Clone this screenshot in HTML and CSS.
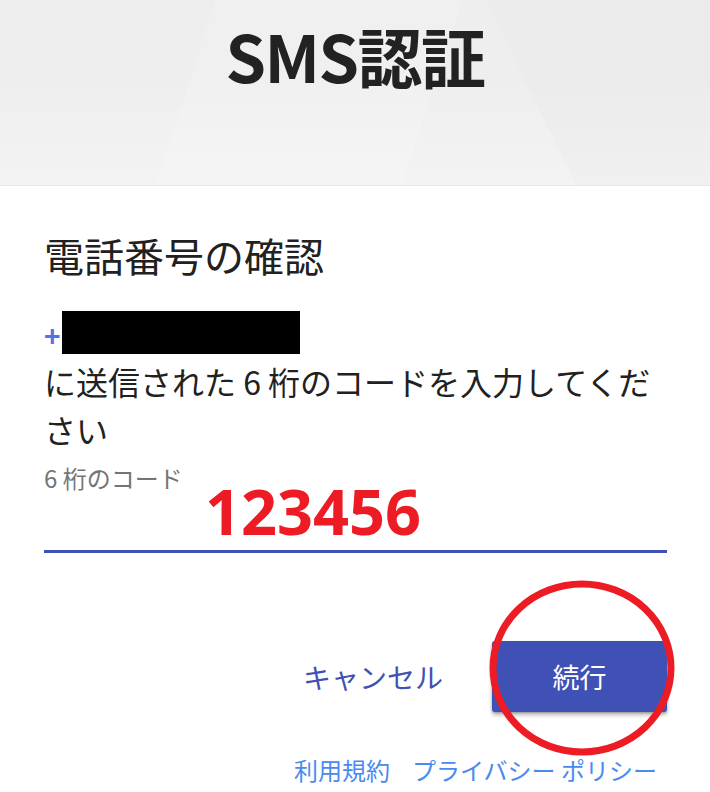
FILE: index.html
```html
<!DOCTYPE html>
<html lang="ja">
<head>
<meta charset="utf-8">
<title>SMS認証</title>
<link rel="stylesheet" href="styles.css">
</head>
<body>
<div class="page">
  <header class="hero">
    <h1 class="hero-title">SMS認証</h1>
  </header>
  <main class="card">
    <h2 class="card-title">電話番号の確認</h2>
    <div class="phone-row">
      <span class="plus">+</span><span class="redact"></span>
    </div>
    <p class="desc">に送信された 6 桁のコードを入力してください</p>
    <div class="field">
      <label class="field-label">6 桁のコード</label>
      <div class="field-value">123456</div>
    </div>
    <div class="actions">
      <button class="btn-cancel">キャンセル</button>
      <button class="btn-primary">続行</button>
    </div>
    <nav class="footer-links">
      <a class="link">利用規約</a>
      <a class="link">プライバシー ポリシー</a>
    </nav>
    <svg class="annot" width="200" height="190" viewBox="0 0 200 190">
      <ellipse cx="100" cy="95" rx="89" ry="84" fill="none" stroke="#ed1c24" stroke-width="7"/>
    </svg>
  </main>
</div>
</body>
</html>
```
FILE: styles.css
```css
* { box-sizing: border-box; }
html, body { margin: 0; padding: 0; background: #fff; }
body {
  font-family: "Noto Sans CJK JP", "Noto Sans", sans-serif;
  color: #212121;
  width: 710px;
  height: 792px;
  overflow: hidden;
}
.page { display: flex; flex-direction: column; }
.hero {
  height: 186px;
  background-color: #eeeeee;
  background-image:
    linear-gradient(108deg, rgba(255,255,255,0) 0 28%, rgba(255,255,255,0.14) 28% 60%, rgba(255,255,255,0) 60%),
    linear-gradient(64deg, rgba(0,0,0,0) 0 72%, rgba(0,0,0,0.01) 72% 100%),
    linear-gradient(180deg, rgba(255,255,255,0) 0 40%, rgba(255,255,255,0.3) 100%);
  border-bottom: 1px solid #e7e7e7;
  display: flex;
  justify-content: center;
  align-items: flex-start;
}
.hero-title {
  margin: 16px 0 0;
  font-size: 65px;
  font-weight: 700;
  line-height: 78px;
  color: #222;
  letter-spacing: -1.5px;
}
.card {
  position: relative;
  padding: 44px 43px 0 44px;
  display: flex;
  flex-direction: column;
}
.card-title {
  margin: 0;
  font-size: 40px;
  font-weight: 400;
  line-height: 50px;
  color: #212121;
}
.phone-row {
  margin-top: 31px;
  display: flex;
  align-items: center;
  height: 43px;
}
.plus {
  color: #4f74e6;
  font-size: 28px;
  font-weight: 700;
  width: 18px;
  line-height: 43px;
  padding-top: 6px;
}
.redact {
  display: block;
  width: 238px;
  height: 43px;
  background: #000;
}
.desc {
  margin: 3px 0 0;
  font-size: 32px;
  line-height: 48px;
  color: #212121;
}
.field {
  margin-top: 12px;
  display: flex;
  flex-direction: column;
  border-bottom: 3px solid #3f51b5;
  height: 88px;
}
.field-label {
  font-size: 24px;
  line-height: 26px;
  color: #757575;
}
.field-value {
  padding-left: 161px;
  margin-top: -14px;
  font-family: "Open Sans", "Noto Sans", sans-serif;
  font-weight: 700;
  font-size: 63px;
  line-height: 68px;
  color: #ed1c24;
}
.actions {
  margin-top: 88px;
  display: flex;
  justify-content: flex-end;
  align-items: center;
  gap: 25px;
}
.btn-cancel {
  font-family: "Noto Sans CJK JP", sans-serif;
  background: none;
  border: none;
  color: #3f51b5;
  font-size: 28px;
  padding: 0 24px;
  height: 71px;
}
.btn-primary {
  font-family: "Noto Sans CJK JP", sans-serif;
  width: 175px;
  height: 71px;
  background: #3f51b5;
  color: #fff;
  border: none;
  border-radius: 3px;
  font-size: 27px;
  box-shadow: 0 3px 4px rgba(0,0,0,0.28), 0 1px 2px rgba(0,0,0,0.2);
}
.footer-links {
  margin-top: 43px;
  display: flex;
  justify-content: flex-end;
  gap: 22px;
  padding-right: 10px;
}
.link {
  color: #4a8af0;
  font-size: 24px;
  line-height: 30px;
  text-decoration: none;
}
.annot {
  position: absolute;
  left: 482px;
  top: 387px;
}
```
